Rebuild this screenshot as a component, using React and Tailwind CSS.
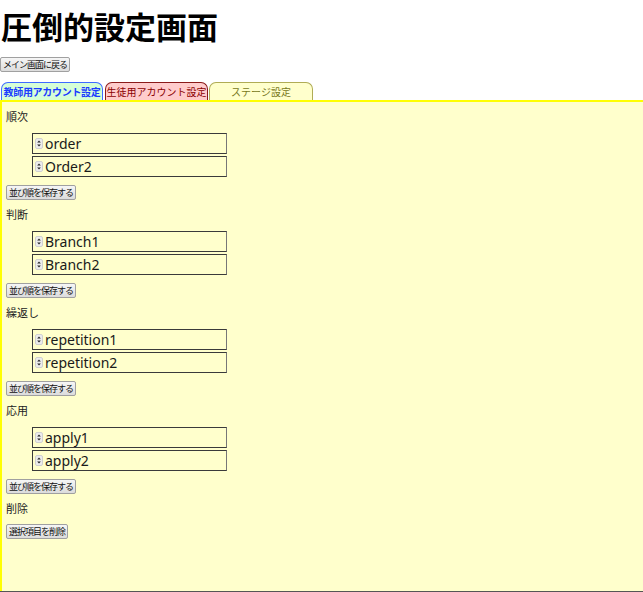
import React from 'react'

const SECTIONS = [
  { label: '順次', items: ['order', 'Order2'] },
  { label: '判断', items: ['Branch1', 'Branch2'] },
  { label: '繰返し', items: ['repetition1', 'repetition2'] },
  { label: '応用', items: ['apply1', 'apply2'] },
]

const jp = { fontFamily: '"Noto Sans CJK JP", "Noto Sans", sans-serif' }

function SmallButton({ children, className = '' }) {
  return (
    <button
      className={`h-[15px] px-[2px] flex items-center border border-[#a0a0a0] rounded-[2px] bg-gradient-to-b from-[#f6f6f6] to-[#dcdcdc] text-[9px] leading-none text-[#111] tracking-[-1px] ${className}`}
      style={jp}
    >
      {children}
    </button>
  )
}

function SortHandle() {
  return (
    <svg width="8" height="11" viewBox="0 0 8 11" className="shrink-0">
      <rect x="0.5" y="0.5" width="7" height="10" rx="1.5" fill="#ececec" stroke="#d0d0d0" />
      <path d="M4 2.5 L5.8 4.6 H2.2 Z" fill="#222" />
      <path d="M4 8.5 L5.8 6.4 H2.2 Z" fill="#222" />
    </svg>
  )
}

function Section({ label, items }) {
  return (
    <div className="flex flex-col">
      <div className="mt-[6px] h-4 leading-4 text-[11px] text-[#222] pl-[2px]" style={jp}>{label}</div>
      <ul className="mt-[9px] ml-[28px] flex flex-col gap-[2px]">
        {items.map((it) => (
          <li
            key={it}
            className="w-[195px] h-[21px] flex items-center gap-[2px] pl-[2px] border border-[#3a3a3a] border-r-[#777] bg-[#ffffcc] text-[14px] text-[#1a1a1a]"
            style={{ fontFamily: '"Noto Sans", sans-serif' }}
          >
            <SortHandle />
            {it}
          </li>
        ))}
      </ul>
      <div className="mt-[8px] pl-[2px]">
        <SmallButton>並び順を保存する</SmallButton>
      </div>
    </div>
  )
}

export default function App() {
  return (
    <div className="w-[643px] h-[592px] bg-white flex flex-col overflow-hidden">
      <h1 className="mt-[6px] pl-[1px] text-[31px] leading-[40px] font-bold text-black" style={jp}>
        圧倒的設定画面
      </h1>

      <div className="mt-[11px]">
        <SmallButton>メイン画面に戻る</SmallButton>
      </div>

      {/* Tabs */}
      <div className="mt-[10px] flex items-end pl-[1px] gap-[2px]">
        <div
          className="w-[102px] h-[18px] flex items-center justify-center rounded-t-[7px] border border-b-0 border-[#3f6bff] bg-[#d6ffd6] text-[10px] font-bold text-[#1a3cff] tracking-[-0.3px]"
          style={jp}
        >
          教師用アカウント設定
        </div>
        <div
          className="w-[103px] h-[18px] flex items-center justify-center rounded-t-[7px] border border-b-0 border-[#8b1a1a] bg-[#ffcccc] text-[10px] text-[#8b0000]"
          style={jp}
        >
          生徒用アカウント設定
        </div>
        <div
          className="-ml-[1px] w-[104px] h-[18px] flex items-center justify-center rounded-t-[7px] border border-b-0 border-[#b0ac55] bg-[#ffffcc] text-[10px] text-[#77771a]"
          style={jp}
        >
          ステージ設定
        </div>
      </div>

      {/* Panel */}
      <div className="flex-1 flex flex-col border-t-2 border-l-2 border-[#ffff00] bg-[#ffffcc] pl-[2px]">
        {SECTIONS.map((s) => (
          <Section key={s.label} label={s.label} items={s.items} />
        ))}
        <div className="mt-[6px] h-4 leading-4 text-[11px] text-[#222] pl-[2px]" style={jp}>削除</div>
        <div className="mt-[8px] pl-[2px]">
          <SmallButton>選択項目を削除</SmallButton>
        </div>
      </div>
      <div className="h-[1px] bg-[#555]" />
    </div>
  )
}
